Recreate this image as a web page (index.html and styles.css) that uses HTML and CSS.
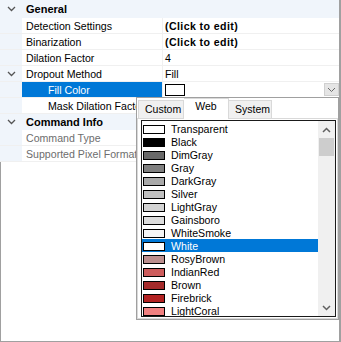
FILE: index.html
```html
<!DOCTYPE html>
<html lang="en">
<head>
    <meta charset="UTF-8">
    <title>Property Grid</title>
    <link rel="stylesheet" href="styles.css">
</head>
<body>
    <div class="frame">
        <div class="grid">
            <div class="row cat first">
                <span class="gut"><svg class="chev" width="9" height="6"><polyline points="1,1 4.5,4.5 8,1"/></svg></span>
                <span class="catname">General</span>
            </div>
            <div class="row">
                <span class="gut"></span>
                <span class="name">Detection Settings</span>
                <span class="val bold">(Click to edit)</span>
            </div>
            <div class="row">
                <span class="gut"></span>
                <span class="name">Binarization</span>
                <span class="val bold">(Click to edit)</span>
            </div>
            <div class="row">
                <span class="gut"></span>
                <span class="name">Dilation Factor</span>
                <span class="val">4</span>
            </div>
            <div class="row">
                <span class="gut"><svg class="chev" width="9" height="6"><polyline points="1,1 4.5,4.5 8,1"/></svg></span>
                <span class="name">Dropout Method</span>
                <span class="val">Fill</span>
            </div>
            <div class="row sel">
                <span class="gut"></span>
                <span class="name sub">Fill Color</span>
                <span class="val">
                    <span class="colorbox"></span>
                    <span class="ddbtn"><svg class="chev" width="9" height="6"><polyline points="1,1 4.5,4.5 8,1"/></svg></span>
                </span>
            </div>
            <div class="row">
                <span class="gut"></span>
                <span class="name sub">Mask Dilation Factor</span>
                <span class="val"></span>
            </div>
            <div class="row cat">
                <span class="gut"><svg class="chev" width="9" height="6"><polyline points="1,1 4.5,4.5 8,1"/></svg></span>
                <span class="catname">Command Info</span>
            </div>
            <div class="row ro">
                <span class="gut"></span>
                <span class="name">Command Type</span>
                <span class="val"></span>
            </div>
            <div class="row ro">
                <span class="gut"></span>
                <span class="name">Supported Pixel Formats</span>
                <span class="val"></span>
            </div>
        </div>
        <div class="blank"></div>

        <!-- colour picker drop-down -->
        <div class="popup">
            <div class="tabs">
                <span class="tab">Custom</span>
                <span class="tab on">Web</span>
                <span class="tab">System</span>
            </div>
            <div class="page">
                <div class="list">
                    <div class="items">
                        <div class="item"><span class="sw" style="background:#ffffff"></span>Transparent</div>
                        <div class="item"><span class="sw" style="background:#000000"></span>Black</div>
                        <div class="item"><span class="sw" style="background:#696969"></span>DimGray</div>
                        <div class="item"><span class="sw" style="background:#808080"></span>Gray</div>
                        <div class="item"><span class="sw" style="background:#a9a9a9"></span>DarkGray</div>
                        <div class="item"><span class="sw" style="background:#c0c0c0"></span>Silver</div>
                        <div class="item"><span class="sw" style="background:#d3d3d3"></span>LightGray</div>
                        <div class="item"><span class="sw" style="background:#dcdcdc"></span>Gainsboro</div>
                        <div class="item"><span class="sw" style="background:#f5f5f5"></span>WhiteSmoke</div>
                        <div class="item on"><span class="sw" style="background:#ffffff"></span>White</div>
                        <div class="item"><span class="sw" style="background:#bc8f8f"></span>RosyBrown</div>
                        <div class="item"><span class="sw" style="background:#cd5c5c"></span>IndianRed</div>
                        <div class="item"><span class="sw" style="background:#a52a2a"></span>Brown</div>
                        <div class="item"><span class="sw" style="background:#b22222"></span>Firebrick</div>
                        <div class="item"><span class="sw" style="background:#f08080"></span>LightCoral</div>
                    </div>
                    <div class="sbar">
                        <span class="arrow"><svg width="9" height="6"><polyline points="1,5 4.5,1.5 8,5"/></svg></span>
                        <span class="thumb"></span>
                        <span class="track"></span>
                        <span class="arrow"><svg width="9" height="6"><polyline points="1,1 4.5,4.5 8,1"/></svg></span>
                    </div>
                </div>
            </div>
        </div>
    </div>
</body>
</html>
```

FILE: styles.css
```css
*{
    margin: 0;
    padding: 0;
    box-sizing: border-box;
}
body{
    background: #fff;
    font-family: "Liberation Sans", Arial, sans-serif;
    font-size: 10.6px;
    color: #000;
}
.frame{
    position: relative;
    width: 341px;
    height: 342px;
    display: flex;
    flex-direction: column;
    border-right: 2px solid #a0a0a0;
    border-bottom: 1px solid #a0a0a0;
    overflow: hidden;
}
.grid{
    display: flex;
    flex-direction: column;
}
.row{
    display: flex;
    height: 16px;
    line-height: 16px;
    border-bottom: 1px solid #f0f0f0;
    white-space: nowrap;
}
.row.first{
    height: 18px;
    line-height: 18px;
}
.gut{
    width: 22px;
    flex: none;
    background: #f0f5fb;
    display: flex;
    align-items: center;
    justify-content: center;
}
.chev{
    fill: none;
    stroke: #555;
    stroke-width: 1.3;
}
.name{
    width: 141px;
    flex: none;
    padding-left: 4px;
    overflow: hidden;
    border-right: 1px solid #f0f0f0;
}
.name.sub{
    padding-left: 26px;
}
.val{
    flex: 1;
    padding-left: 2px;
    display: flex;
    align-items: center;
    overflow: hidden;
}
.bold{
    font-weight: bold;
    letter-spacing: 0.4px;
}
.cat{
    background: #f0f5fb;
    border-bottom-color: #f0f5fb;
}
.catname{
    padding-left: 4px;
    font-weight: bold;
    font-size: 11px;
}
.sel .name{
    background: #0078d7;
    color: #fff;
}
.ro .name{
    color: #6d6d6d;
}
.colorbox{
    width: 20px;
    height: 12px;
    border: 1px solid #000;
    background: #fff;
}
.ddbtn{
    margin-left: auto;
    width: 15px;
    height: 13px;
    background: #e5e5e5;
    border: 1px solid #d0d0d0;
    display: flex;
    align-items: center;
    justify-content: center;
}
.ddbtn .chev{
    stroke: #6a6a6a;
    stroke-width: 1;
}
.blank{
    flex: 1;
    border-left: 1px solid #a0a0a0;
}

/* popup */
.popup{
    position: absolute;
    left: 136px;
    top: 97px;
    width: 203px;
    height: 223px;
    background: #fff;
    border: 1px solid #a0a0a0;
    display: flex;
    flex-direction: column;
}
.tabs{
    display: flex;
    align-items: flex-end;
    height: 20px;
    padding-left: 1px;
    font-size: 10.5px;
}
.tab{
    height: 18px;
    line-height: 17px;
    padding: 0 6px;
    width: 46px;
    text-align: center;
    background: #f0f0f0;
    border: 1px solid #d9d9d9;
    border-bottom: none;
}
.tab.on{
    height: 21px;
    line-height: 14px;
    width: 45px;
    background: #fff;
    margin-bottom: -1px;
    position: relative;
    border-left: none;
}
.tab:last-child{
    border-left: none;
    width: 43px;
}
.page{
    flex: 1;
    border: 1px solid #d9d9d9;
    padding: 1px 1px 1px 3px;
}
.list{
    height: 197px;
    border: 1px solid #1a1a1a;
    display: flex;
    overflow: hidden;
}
.items{
    flex: 1;
    overflow: hidden;
    padding-top: 1px;
    font-size: 10.6px;
}
.item{
    display: flex;
    align-items: center;
    height: 13px;
    padding-left: 1px;
    white-space: nowrap;
}
.item.on{
    background: #0078d7;
    color: #fff;
}
.sw{
    width: 22px;
    height: 9px;
    border: 1px solid #000;
    margin: 1px 6px 0 0;
    flex: none;
}
.sbar{
    width: 17px;
    flex: none;
    background: #f0f0f0;
    display: flex;
    flex-direction: column;
}
.arrow{
    height: 17px;
    display: flex;
    align-items: center;
    justify-content: center;
}
.arrow svg{
    fill: none;
    stroke: #606060;
    stroke-width: 1.5;
}
.thumb{
    height: 18px;
    margin: 0 1px;
    background: #cdcdcd;
}
.track{
    flex: 1;
}
```
